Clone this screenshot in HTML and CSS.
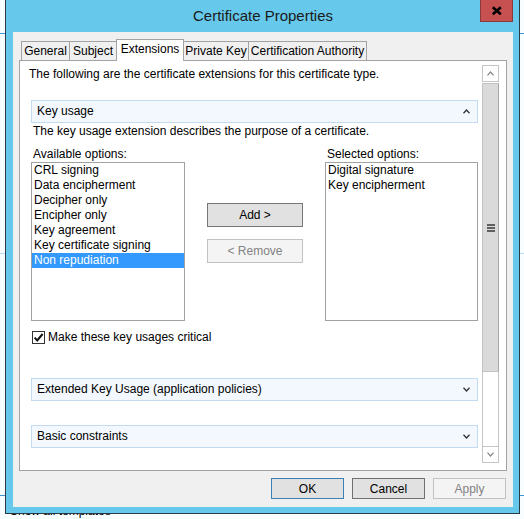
FILE: index.html
```html
<!DOCTYPE html>
<html>
<head>
<meta charset="utf-8">
<title>Certificate Properties</title>
<link rel="stylesheet" href="styles.css">
</head>
<body>
<div class="backapp">
  <div class="bk-line bk-blue bk-top"></div>
  <div class="bk-line bk-pale"></div>
  <div class="bk-line bk-blue bk-low"></div>
  <div class="bk-footer">Show all templates</div>
</div>

<div class="window">
  <div class="titlebar">
    <span class="title">Certificate Properties</span>
    <div class="close">
      <svg width="33" height="22" viewBox="0 0 33 22"><path d="M12.8 8.2 L20.8 15.2 M20.8 8.2 L12.8 15.2" stroke="#000" stroke-width="2.6" fill="none"/></svg>
    </div>
  </div>

  <div class="client">
    <div class="tabs">
      <div class="tab t-general">General</div>
      <div class="tab t-subject">Subject</div>
      <div class="tab t-ext sel">Extensions</div>
      <div class="tab t-pk">Private Key</div>
      <div class="tab t-ca">Certification Authority</div>
    </div>

    <div class="panel">
      <div class="content">
        <div class="intro">The following are the certificate extensions for this certificate type.</div>
        <div class="sections">
          <div class="section-head sh-key">
            <span>Key usage</span>
            <svg class="chev" width="7" height="5" viewBox="0 0 7 5"><path d="M0.5 4.3 L3.5 1 L6.5 4.3" stroke="#333" stroke-width="1.3" fill="none"/></svg>
          </div>
          <div class="desc">The key usage extension describes the purpose of a certificate.</div>
          <div class="lists-row">
            <div class="col-left">
              <div class="label">Available options:</div>
              <div class="listbox">
                <div class="item">CRL signing</div>
                <div class="item">Data encipherment</div>
                <div class="item">Decipher only</div>
                <div class="item">Encipher only</div>
                <div class="item">Key agreement</div>
                <div class="item">Key certificate signing</div>
                <div class="item selected">Non repudiation</div>
              </div>
            </div>
            <div class="col-mid">
              <div class="btn">Add &gt;</div>
              <div class="btn disabled">&lt; Remove</div>
            </div>
            <div class="col-right">
              <div class="label">Selected options:</div>
              <div class="listbox">
                <div class="item">Digital signature</div>
                <div class="item">Key encipherment</div>
              </div>
            </div>
          </div>
          <div class="crit">
            <span class="chk"><svg width="11" height="11" viewBox="0 0 11 11"><path d="M1.6 5.6 L4.2 8.4 L9.6 2" stroke="#111" stroke-width="2" fill="none"/></svg></span>
            <span class="crit-label">Make these key usages critical</span>
          </div>
          <div class="section-head sh-ext">
            <span>Extended Key Usage (application policies)</span>
            <svg class="chev" width="7" height="5" viewBox="0 0 7 5"><path d="M0.5 0.7 L3.5 4 L6.5 0.7" stroke="#333" stroke-width="1.3" fill="none"/></svg>
          </div>
          <div class="section-head sh-basic">
            <span>Basic constraints</span>
            <svg class="chev" width="7" height="5" viewBox="0 0 7 5"><path d="M0.5 0.7 L3.5 4 L6.5 0.7" stroke="#333" stroke-width="1.3" fill="none"/></svg>
          </div>
        </div>
      </div>

      <div class="scrollbar">
        <div class="sb-btn">
          <svg width="7" height="5" viewBox="0 0 7 5"><path d="M0.5 4.3 L3.5 1 L6.5 4.3" stroke="#858585" stroke-width="1.2" fill="none"/></svg>
        </div>
        <div class="sb-thumb"><span class="grip"></span></div>
        <div class="sb-track"></div>
        <div class="sb-btn">
          <svg width="7" height="5" viewBox="0 0 7 5"><path d="M0.5 0.7 L3.5 4 L6.5 0.7" stroke="#858585" stroke-width="1.2" fill="none"/></svg>
        </div>
      </div>
    </div>

    <div class="footer">
      <div class="fbtn default">OK</div>
      <div class="fbtn">Cancel</div>
      <div class="fbtn disabled">Apply</div>
    </div>
  </div>
</div>
</body>
</html>
```

FILE: styles.css
```css
* {
  box-sizing: border-box;
}

html, body {
  margin: 0;
  padding: 0;
}

body {
  width: 524px;
  height: 519px;
  overflow: hidden;
  position: relative;
  background: #f8fdff;
  font-family: "Liberation Sans", Arial, sans-serif;
  font-size: 12px;
  color: #000;
}

/* background application behind the dialog */
.backapp {
  height: 519px;
  display: flow-root;
  overflow: hidden;
}

.bk-line {
  height: 1px;
}

.bk-blue {
  background: #3f95d2;
}

.bk-pale {
  background: #b9dcf2;
  margin-top: 219px;
}

.bk-top {
  margin-top: 33px;
}

.bk-low {
  margin-top: 241px;
}

.bk-footer {
  margin-top: 8px;
  padding-left: 10px;
  line-height: 15px;
  color: #000;
}

/* dialog window */
.window {
  position: absolute;
  left: 5px;
  top: 0;
  width: 515px;
  height: 514px;
  background: #66c8ea;
  border: 1px solid #2b3b45;
  border-top: none;
  padding: 0 6px 6px 7px;
  display: flex;
  flex-direction: column;
}

.titlebar {
  height: 32px;
  position: relative;
  display: flex;
  align-items: center;
  justify-content: center;
  padding-bottom: 1px;
}

.title {
  font-size: 15px;
  color: #1a1a1a;
}

.close {
  position: absolute;
  top: 0;
  right: 0;
  width: 33px;
  height: 22px;
  background: #c75050;
  border: 1px solid #8a3a3a;
  border-top: none;
  display: flex;
  align-items: center;
  justify-content: center;
}

.close svg {
  display: block;
  margin: -1px -1px 0 -1px;
}

.client {
  flex: 1;
  background: #f0f0f0;
  padding-top: 7px;
  display: flex;
  flex-direction: column;
}

/* tabs */
.tabs {
  display: flex;
  align-items: flex-end;
  height: 22px;
  margin-left: 8px;
  margin-bottom: -1px;
  position: relative;
  z-index: 1;
}

.tab {
  height: 19px;
  margin-bottom: 1px;
  margin-left: -1px;
  border: 1px solid #a3a3a3;
  border-bottom: none;
  background: #f0f0f0;
  text-align: center;
  line-height: 18px;
  white-space: nowrap;
}

.t-general { width: 49px; margin-left: 0; }
.t-subject { width: 48px; }
.t-ext { width: 68px; }
.t-pk { width: 66px; }
.t-ca { width: 119px; }

.tab.sel {
  height: 22px;
  margin-bottom: 0;
  background: #fff;
  line-height: 19px;
  padding-bottom: 2px;
  position: relative;
  z-index: 2;
}

/* tab page */
.panel {
  height: 411px;
  margin: 0 6px;
  border: 1px solid #a3a3a3;
  background: #fff;
  display: flex;
}

.content {
  flex: 1;
  display: flex;
  flex-direction: column;
}

.intro {
  margin: 6px 0 0 9px;
  line-height: 15px;
}

.sections {
  padding: 0 4px 0 11px;
  display: flex;
  flex-direction: column;
}

.section-head {
  height: 23px;
  border: 1px solid #c4daf1;
  background: #f3f8fe;
  display: flex;
  align-items: center;
  justify-content: space-between;
  padding: 0 7px 0 5px;
  line-height: 15px;
}

.section-head .chev {
  display: block;
}

.sh-key {
  margin-top: 18px;
}

.sh-ext {
  margin-top: 33px;
}

.sh-basic {
  margin-top: 24px;
}

.desc {
  margin-top: 1px;
  padding-left: 2px;
  line-height: 15px;
}

.lists-row {
  display: flex;
  margin-top: 8px;
}

.col-left {
  width: 154px;
}

.col-right {
  width: 153px;
}

.col-mid {
  width: 140px;
  padding-top: 56px;
  display: flex;
  flex-direction: column;
  align-items: center;
  gap: 12px;
}

.label {
  padding-left: 2px;
  line-height: 15px;
}

.listbox {
  height: 159px;
  border: 1px solid #a2a2a2;
  background: #fff;
}

.item {
  height: 15px;
  line-height: 15px;
  padding-left: 2px;
  white-space: nowrap;
}

.item.selected {
  background: #3399ff;
  color: #fff;
}

.btn {
  width: 96px;
  height: 24px;
  border: 1px solid #767676;
  background: #e1e1e1;
  display: flex;
  align-items: center;
  justify-content: center;
}

.btn.disabled {
  border-color: #c2c2c2;
  background: #f4f4f4;
  color: #838383;
}

.crit {
  margin-top: 9px;
  height: 15px;
  display: flex;
  align-items: center;
  padding-left: 1px;
}

.chk {
  width: 13px;
  height: 13px;
  border: 1px solid #333;
  background: #fff;
  display: flex;
  align-items: center;
  justify-content: center;
}

.chk svg {
  display: block;
}

.crit-label {
  margin-left: 3px;
  line-height: 15px;
}

/* scrollbar */
.scrollbar {
  width: 17px;
  margin: 4px 7px 7px 0;
  display: flex;
  flex-direction: column;
}

.sb-btn {
  height: 17px;
  border: 1px solid #c5c5c5;
  background: #fff;
  display: flex;
  align-items: center;
  justify-content: center;
}

.sb-btn svg {
  display: block;
}

.sb-thumb {
  height: 289px;
  margin-top: 1px;
  background: #dadada;
  border: 1px solid #c3c3c3;
  border-right-color: #a9a9a9;
  display: flex;
  align-items: center;
  justify-content: center;
}

.grip {
  width: 8px;
  height: 8px;
  background: linear-gradient(#606060 0 2px, transparent 2px 3px, #606060 3px 5px, transparent 5px 6px, #606060 6px 8px);
}

.sb-track {
  flex: 1;
  border-left: 1px solid #c5c5c5;
  border-right: 1px solid #c5c5c5;
  background: #fff;
}

/* dialog buttons */
.footer {
  display: flex;
  justify-content: flex-end;
  gap: 8px;
  margin: 7px 7px 0 0;
}

.fbtn {
  width: 73px;
  height: 21px;
  border: 1px solid #707070;
  background: #e1e1e1;
  display: flex;
  align-items: center;
  justify-content: center;
}

.fbtn.default {
  border-color: #3c7fb1;
}

.fbtn.disabled {
  border-color: #c2c2c2;
  background: #f4f4f4;
  color: #838383;
}
```
